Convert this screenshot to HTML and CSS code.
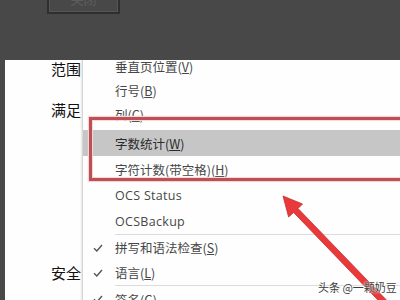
FILE: index.html
```html
<!DOCTYPE html>
<html lang="zh-CN">
<head>
  <meta charset="UTF-8">
  <title>状态栏菜单</title>
  <link rel="stylesheet" href="styles.css">
</head>
<body>

  <div class="top">
    <div class="btn">关闭</div>
  </div>

  <div class="main">
    <div class="dialog">
      <div class="label first">范围</div>
      <div class="label second">满足</div>
      <div class="label third">安全</div>
    </div>

    <div class="menu">
      <div class="list">
        <div class="item"><span class="check"></span>垂直页位置(<u>V</u>)</div>
        <div class="item"><span class="check"></span>行号(<u>B</u>)</div>
        <div class="item"><span class="check"></span>列(<u>C</u>)</div>
        <div class="item hover tall"><span class="check"></span>字数统计(<u>W</u>)</div>
        <div class="item tall"><span class="check"></span>字符计数(带空格)(<u>H</u>)</div>
        <div class="item tall latin"><span class="check"></span>OCS Status</div>
        <div class="item tall latin"><span class="check"></span>OCSBackup</div>
        <div class="sep"></div>
        <div class="item mid"><span class="check"><svg width="10" height="8" viewBox="0 0 10 8"><path d="M1 4.2 L3.8 7 L9 1" fill="none" stroke="#555" stroke-width="1.4"/></svg></span>拼写和语法检查(<u>S</u>)</div>
        <div class="item mid"><span class="check"><svg width="10" height="8" viewBox="0 0 10 8"><path d="M1 4.2 L3.8 7 L9 1" fill="none" stroke="#555" stroke-width="1.4"/></svg></span>语言(<u>L</u>)</div>
        <div class="sep"></div>
        <div class="item tall"><span class="check"><svg width="10" height="8" viewBox="0 0 10 8"><path d="M1 4.2 L3.8 7 L9 1" fill="none" stroke="#555" stroke-width="1.4"/></svg></span>签名(<u>G</u>)</div>
      </div>
    </div>
  </div>

  <!-- annotations drawn over the screenshot -->
  <div class="mark-box"></div>
  <svg class="arrow" width="400" height="300" viewBox="0 0 400 300">
    <polygon points="283,196 302.5,204 298,208.5 397,311 392.5,315.2 293.6,212.4 288.6,217" fill="#e8393b" stroke="#c92c2e" stroke-width="0.8"/>
  </svg>
  <div class="watermark">头条 @一颗奶豆</div>

</body>
</html>
```

FILE: styles.css
```css
body {
  margin: 0;
  width: 400px;
  height: 300px;
  overflow: hidden;
  position: relative;
  background-color: #484848;
  font-family: "Noto Sans CJK SC", "Noto Sans", sans-serif;
}

.top {
  height: 60px;
  padding-left: 47px;
  overflow: hidden;
}

.btn {
  width: 73px;
  height: 34px;
  margin-top: -20px;
  box-sizing: border-box;
  border: 2px solid #2f2f2f;
  box-shadow: inset 0 0 0 1px #555;
  color: #5e5e5e;
  font-size: 13px;
  text-align: center;
  line-height: 34px;
}

.main {
  display: flex;
  height: 240px;
  margin-left: 5px;
  background-color: #fefefe;
}

.dialog {
  width: 77px;
  padding-left: 46px;
  box-sizing: border-box;
  position: relative;
  box-shadow: inset -2px 0 2px -1px #e6e6e6;
}

.label {
  font-size: 15px;
  line-height: 18px;
  color: #111;
  white-space: nowrap;
}

.label.second {
  margin-top: 23px;
}

.label.third {
  margin-top: 145px;
}

.menu {
  flex: 1;
  border-left: 1px solid #d6d6d6;
  overflow: hidden;
}

.list {
  margin-top: -6px;
}

.item {
  display: flex;
  align-items: center;
  height: 24px;
  font-size: 12.5px;
  color: #474747;
  white-space: nowrap;
}

.item.hover {
  margin-top: 4px;
  background-color: #c6c6c6;
  color: #2a2a2a;
}

.item.tall {
  height: 26px;
}

.item.mid {
  height: 25px;
}

.item.latin {
  font-family: "Open Sans", "Noto Sans", sans-serif;
  letter-spacing: 0.3px;
}

.check {
  display: flex;
  justify-content: center;
  width: 32px;
  padding-right: 2px;
  box-sizing: border-box;
}

.sep {
  height: 1px;
  margin-left: 32px;
  background-color: #dcdcdc;
}

.mark-box {
  position: absolute;
  left: 89px;
  top: 117px;
  width: 320px;
  height: 64px;
  box-sizing: border-box;
  border: 3px solid #bd4f55;
  box-shadow: 0 0 1px 1px #f4d6d6, inset 0 0 1px 1px #f4d6d6;
}

.arrow {
  position: absolute;
  left: 0;
  top: 0;
}

.watermark {
  position: absolute;
  left: 318px;
  top: 279px;
  font-size: 11px;
  color: #3c3c3c;
  white-space: nowrap;
  text-shadow: 0 0 2px #fff, 0 0 2px #fff;
}
```
